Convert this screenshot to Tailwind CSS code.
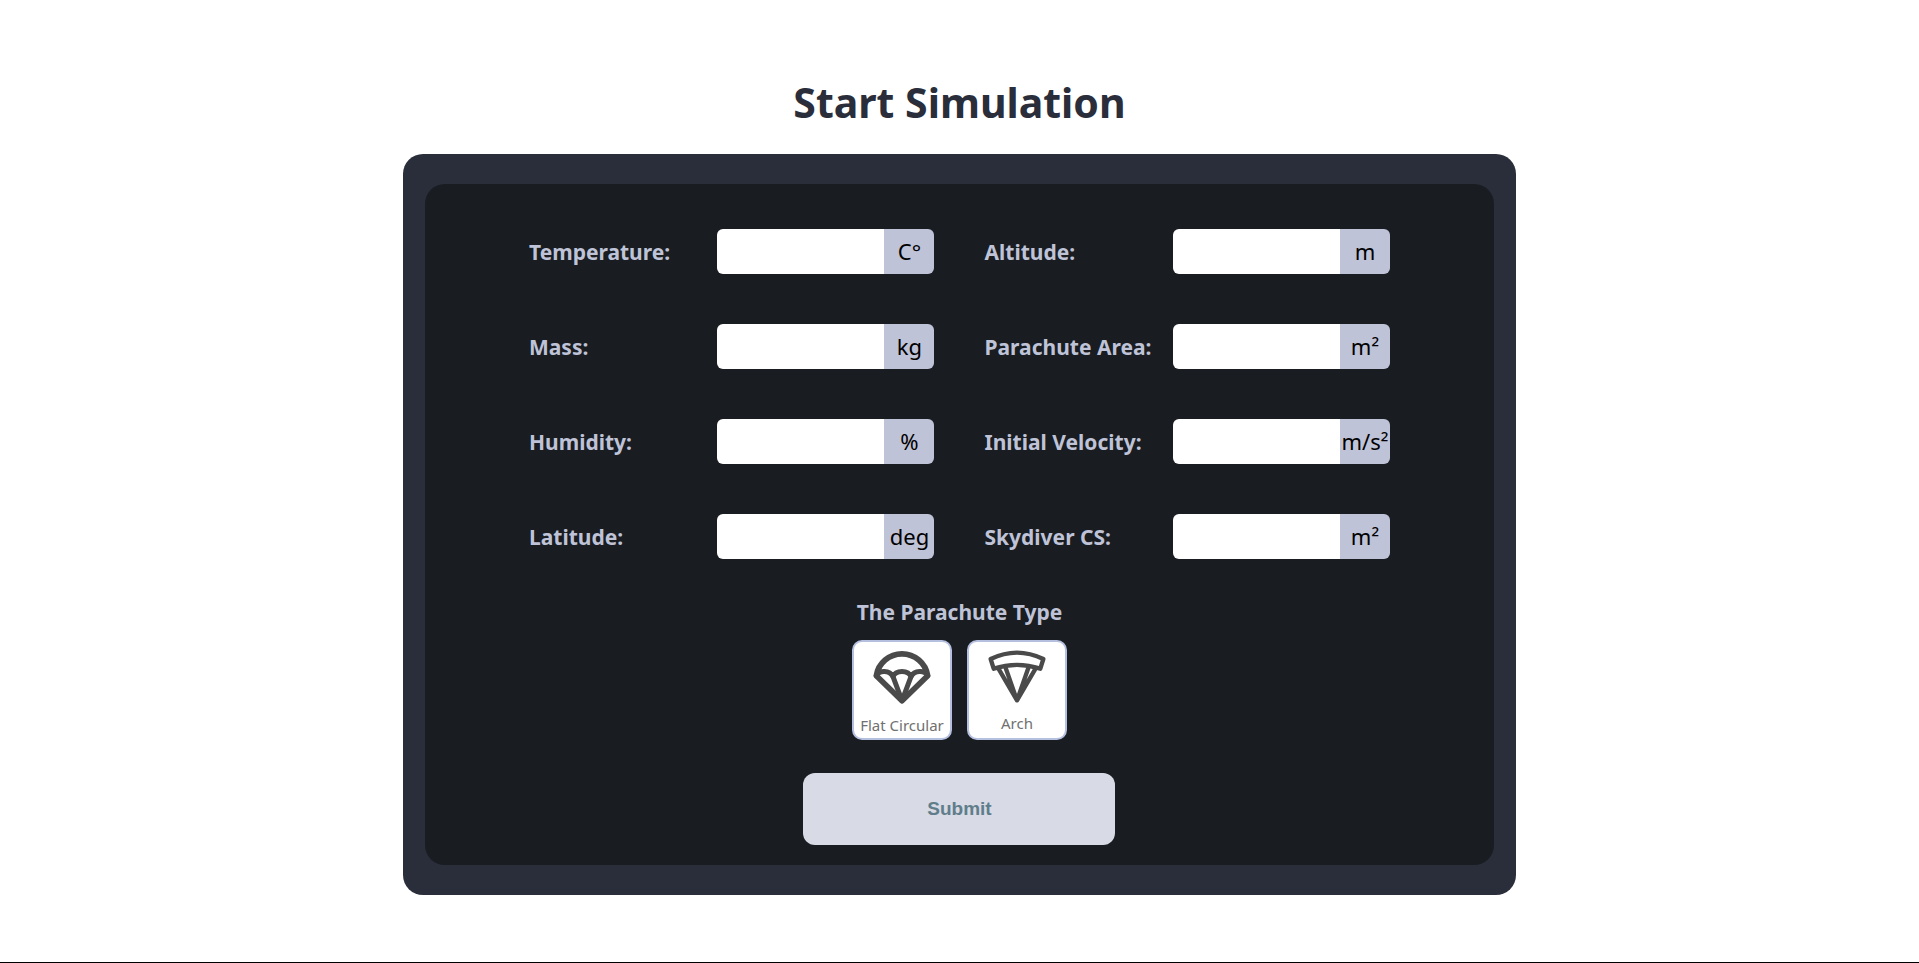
<!DOCTYPE html>
<html lang="en">
<head>
<meta charset="utf-8">
<meta name="viewport" content="width=device-width, initial-scale=1">
<title>Start Simulation</title>
<script src="https://cdn.jsdelivr.net/npm/@tailwindcss/browser@4"></script>
</head>
<body class="flex min-h-screen flex-col items-center border-b border-black bg-white font-['Noto_Sans',sans-serif] text-black">
  <h1 class="mt-[72px] mb-[22px] text-[41px] leading-[60px] font-bold text-[#2a2d3a]">Start Simulation</h1>
  <main class="w-[58%] rounded-[20px] bg-[#2a2d3a] px-[22px] py-[30px]">
    <form class="flex flex-col items-center rounded-[20px] bg-[#191c20] px-[104px] pt-[45px] pb-5">
      <div class="grid w-full grid-cols-2 gap-x-[50px] gap-y-[50px] text-[22px] leading-[44px]">
        <div class="flex">
          <label for="temperature" class="h-[45px] flex-1 text-[21px] leading-[46px] font-bold whitespace-nowrap text-[#bfc3d7]">Temperature:</label>
          <div class="flex h-[45px] w-[217px] overflow-hidden rounded-md">
            <input id="temperature" type="text" class="min-w-0 flex-1 bg-white px-3 outline-none">
            <span class="w-[50px] bg-[#bfc3d7] text-center whitespace-nowrap">C°</span>
          </div>
        </div>
        <div class="flex">
          <label for="altitude" class="h-[45px] flex-1 text-[21px] leading-[46px] font-bold whitespace-nowrap text-[#bfc3d7]">Altitude:</label>
          <div class="flex h-[45px] w-[217px] overflow-hidden rounded-md">
            <input id="altitude" type="text" class="min-w-0 flex-1 bg-white px-3 outline-none">
            <span class="w-[50px] bg-[#bfc3d7] text-center whitespace-nowrap">m</span>
          </div>
        </div>
        <div class="flex">
          <label for="mass" class="h-[45px] flex-1 text-[21px] leading-[46px] font-bold whitespace-nowrap text-[#bfc3d7]">Mass:</label>
          <div class="flex h-[45px] w-[217px] overflow-hidden rounded-md">
            <input id="mass" type="text" class="min-w-0 flex-1 bg-white px-3 outline-none">
            <span class="w-[50px] bg-[#bfc3d7] text-center whitespace-nowrap">kg</span>
          </div>
        </div>
        <div class="flex">
          <label for="area" class="h-[45px] flex-1 text-[21px] leading-[46px] font-bold whitespace-nowrap text-[#bfc3d7]">Parachute Area:</label>
          <div class="flex h-[45px] w-[217px] overflow-hidden rounded-md">
            <input id="area" type="text" class="min-w-0 flex-1 bg-white px-3 outline-none">
            <span class="w-[50px] bg-[#bfc3d7] text-center whitespace-nowrap">m²</span>
          </div>
        </div>
        <div class="flex">
          <label for="humidity" class="h-[45px] flex-1 text-[21px] leading-[46px] font-bold whitespace-nowrap text-[#bfc3d7]">Humidity:</label>
          <div class="flex h-[45px] w-[217px] overflow-hidden rounded-md">
            <input id="humidity" type="text" class="min-w-0 flex-1 bg-white px-3 outline-none">
            <span class="w-[50px] bg-[#bfc3d7] text-center whitespace-nowrap">%</span>
          </div>
        </div>
        <div class="flex">
          <label for="velocity" class="h-[45px] flex-1 text-[21px] leading-[46px] font-bold whitespace-nowrap text-[#bfc3d7]">Initial Velocity:</label>
          <div class="flex h-[45px] w-[217px] overflow-hidden rounded-md">
            <input id="velocity" type="text" class="min-w-0 flex-1 bg-white px-3 outline-none">
            <span class="w-[50px] bg-[#bfc3d7] text-center whitespace-nowrap">m/s²</span>
          </div>
        </div>
        <div class="flex">
          <label for="latitude" class="h-[45px] flex-1 text-[21px] leading-[46px] font-bold whitespace-nowrap text-[#bfc3d7]">Latitude:</label>
          <div class="flex h-[45px] w-[217px] overflow-hidden rounded-md">
            <input id="latitude" type="text" class="min-w-0 flex-1 bg-white px-3 outline-none">
            <span class="w-[50px] bg-[#bfc3d7] text-center whitespace-nowrap">deg</span>
          </div>
        </div>
        <div class="flex">
          <label for="skydiver" class="h-[45px] flex-1 text-[21px] leading-[46px] font-bold whitespace-nowrap text-[#bfc3d7]">Skydiver CS:</label>
          <div class="flex h-[45px] w-[217px] overflow-hidden rounded-md">
            <input id="skydiver" type="text" class="min-w-0 flex-1 bg-white px-3 outline-none">
            <span class="w-[50px] bg-[#bfc3d7] text-center whitespace-nowrap">m²</span>
          </div>
        </div>
      </div>

      <fieldset class="mt-[38px]">
        <legend class="mx-auto mb-[13px] text-[21px] leading-[30px] font-bold text-[#bfc3d7]">The Parachute Type</legend>
        <div class="flex justify-center gap-[15px] text-[15px] leading-5 text-[#707070]">
          <label class="flex size-[100px] cursor-pointer flex-col items-center justify-between rounded-[10px] border-2 border-[#b5c0e0] bg-white pt-2 pb-[3px]">
            <input type="radio" name="type" value="flat" class="sr-only">
            <svg class="h-[54px] w-[58px]" viewBox="0 0 174 162" fill="none" stroke="#4a4a4a" stroke-width="17" stroke-linecap="round" stroke-linejoin="round" aria-hidden="true">
              <path d="M10 77A78 78 0 0 1 164 77L87 152Z"/>
              <path stroke-width="15" d="M10 77C18 60 50 60 60 80C68 59 106 59 114 80C124 60 156 60 164 77"/>
              <path stroke-width="15" d="M60 80L87 152L114 80"/>
            </svg>
            <span class="whitespace-nowrap">Flat Circular</span>
          </label>
          <label class="flex size-[100px] cursor-pointer flex-col items-center justify-between rounded-[10px] border-2 border-[#b5c0e0] bg-white pt-[7px] pb-[5px]">
            <input type="radio" name="type" value="arch" class="sr-only">
            <svg class="h-[54px] w-[58px]" viewBox="0 0 174 162" fill="none" stroke="#4a4a4a" stroke-width="13" stroke-linecap="round" stroke-linejoin="round" aria-hidden="true">
              <path d="M8 30Q87 -8 166 30L157 59Q87 36 17 59Z"/>
              <path d="M31 58L87 154L143 58M52 54L87 154L122 54"/>
            </svg>
            <span>Arch</span>
          </label>
        </div>
      </fieldset>

      <button type="submit" class="mt-[33px] h-[72px] w-[312px] cursor-pointer rounded-xl bg-[#d8dae5] font-['Liberation_Sans',sans-serif] text-[19px] font-bold text-[#607d8b]">Submit</button>
    </form>
  </main>
</body>
</html>
